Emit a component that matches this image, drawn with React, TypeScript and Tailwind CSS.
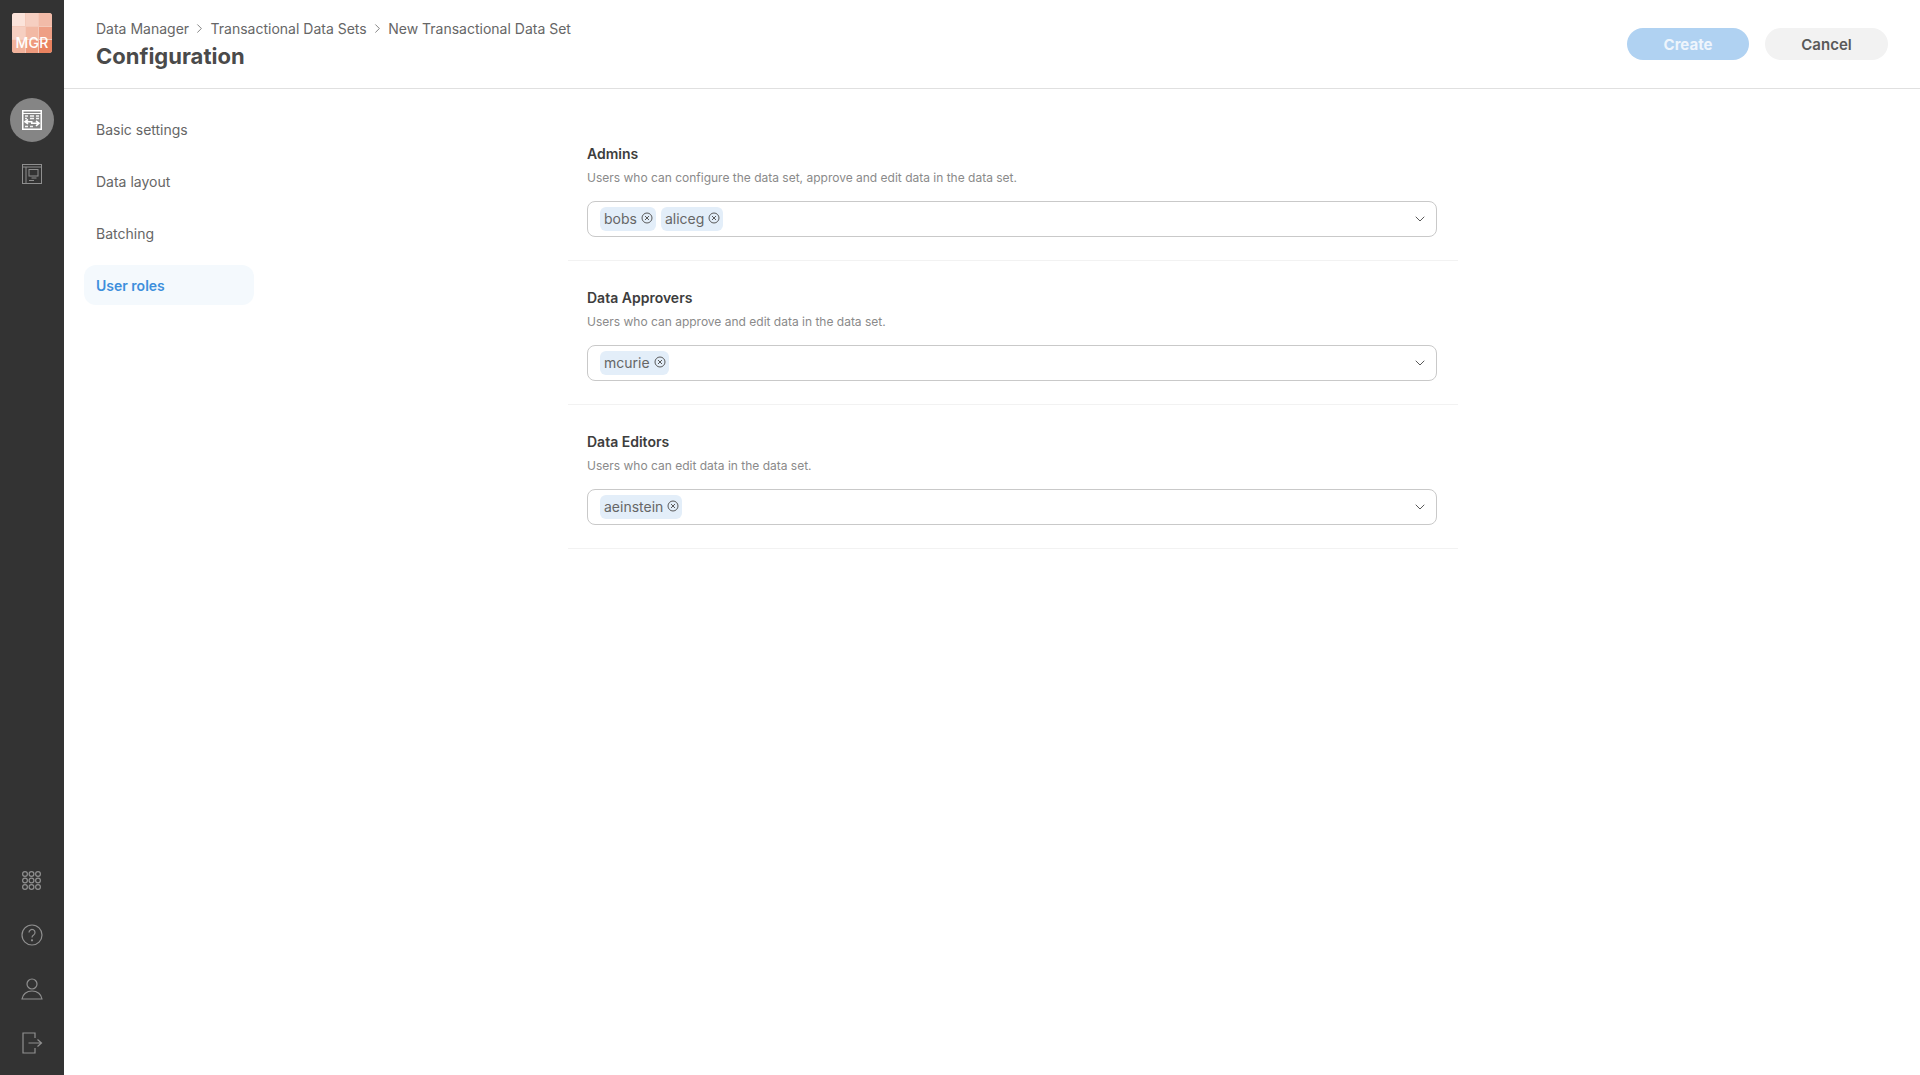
import { ChevronDown, ChevronRight } from "lucide-react";

const sideIcon = "w-[22px] h-[22px]";

function Logo() {
  const cells = ["#fbe3da", "#f6cfc1", "#f2bba8", "#f6cfc1", "#f2b9a4", "#ee9f85", "#f2b29b", "#ee9a7d", "#e9825f"];
  return (
    <div className="relative w-10 h-10 rounded-[3px] overflow-hidden grid grid-cols-3 grid-rows-3 gap-px bg-[#f4c9b9]">
      {cells.map((c, i) => (
        <div key={i} style={{ backgroundColor: c }} />
      ))}
      <span className="absolute left-0 right-0 bottom-[2px] text-center text-white text-[14px] leading-[17px] font-medium tracking-[0.2px]">
        MGR
      </span>
    </div>
  );
}

function DataSetIcon() {
  return (
    <svg viewBox="0 0 20 20" className="w-5 h-5" fill="none" stroke="#fff">
      <rect x="0.75" y="0.75" width="18.5" height="18.5" strokeWidth="1.5" />
      <path d="M1 3.500h18" strokeWidth="1" />
      <path d="M3 6h3M8 6h4M14 6h3M8 8.500h4M14 8.500h3M3 8.500h2M3 16.500h3M8 16.500h3" strokeWidth="1.400" opacity="0.9" />
      <path d="M6 9.500l-3 2.200 3 2.200M3 11.700h7.500M14 10.800l3 2.500-3 2.500M9 13.300h8" strokeWidth="1.600" />
    </svg>
  );
}

function PagesIcon() {
  return (
    <svg viewBox="0 0 20 20" className="w-5 h-5" fill="none" stroke="#8f8f8f" strokeWidth="1">
      <rect x="0.5" y="0.5" width="19" height="19" />
      <path d="M0.5 3h19M4 3v16.500" />
      <rect x="7" y="5.500" width="9" height="6.500" />
      <path d="M9.500 14h5M7 16.500h5" />
    </svg>
  );
}

function AppsIcon() {
  const pts = [3, 9.5, 16];
  return (
    <svg viewBox="0 0 20 20" className={sideIcon} fill="none" stroke="#8f8f8f" strokeWidth="1.2">
      {pts.map((y) => pts.map((x) => <circle key={`${x}-${y}`} cx={x} cy={y} r="2.4" />))}
    </svg>
  );
}

function HelpIcon() {
  return (
    <svg viewBox="0 0 22 22" className={sideIcon} fill="none" stroke="#8f8f8f" strokeWidth="1.2">
      <circle cx="11" cy="11" r="10" />
      <path d="M8 8.500a3 3 0 1 1 4.600 2.500c-1 .6-1.600 1.200-1.600 2.500" />
      <circle cx="11" cy="16.300" r="0.5" fill="#8f8f8f" />
    </svg>
  );
}

function UserIcon() {
  return (
    <svg viewBox="0 0 22 22" className={sideIcon} fill="none" stroke="#8f8f8f" strokeWidth="1.2">
      <circle cx="11" cy="6" r="5" />
      <path d="M1 21c.6-4.600 4.600-8 10-8s9.400 3.400 10 8z" />
    </svg>
  );
}

function LogoutIcon() {
  return (
    <svg viewBox="0 0 22 22" className={sideIcon} fill="none" stroke="#8f8f8f" strokeWidth="1.2">
      <path d="M14 6V1H2v20h12v-5" />
      <path d="M7.500 11H20M16.500 7.500L20.500 11l-4 3.500" />
    </svg>
  );
}

function Sidebar() {
  return (
    <div className="w-16 shrink-0 bg-[#333333] flex flex-col items-center">
      <div className="mt-[13px]">
        <Logo />
      </div>
      <div className="mt-[45px] w-11 h-11 rounded-full bg-[#858585] flex items-center justify-center">
        <DataSetIcon />
      </div>
      <div className="mt-[21px] w-11 h-[22px] flex items-center justify-center">
        <PagesIcon />
      </div>
      <div className="mt-auto mb-[21px] flex flex-col items-center gap-[32px]">
        <div className="w-5 h-[22px] flex items-center justify-center"><AppsIcon /></div>
        <HelpIcon />
        <UserIcon />
        <LogoutIcon />
      </div>
    </div>
  );
}

function Crumbs() {
  const items = ["Data Manager", "Transactional Data Sets", "New Transactional Data Set"];
  return (
    <div className="flex items-center text-[14px] leading-5 text-[#666666]">
      {items.map((item, i) => (
        <div key={item} className="flex items-center">
          {i > 0 && <ChevronRight size={15} strokeWidth={1.1} className="mx-[3.25px] text-[#4d4d4d] -translate-y-px" />}
          <span>{item}</span>
        </div>
      ))}
    </div>
  );
}

function Header() {
  return (
    <div className="h-[89px] shrink-0 border-b border-[#e0e0e0] pl-8 pr-8 flex items-start justify-between">
      <div className="pt-[19px]">
        <Crumbs />
        <h1 className="mt-[2px] text-[22px] leading-[30px] font-bold text-[#4a4a4a]">Configuration</h1>
      </div>
      <div className="pt-[28px] flex gap-4">
        <button className="w-[122px] h-8 pt-0.5 rounded-2xl bg-[#b0d2f2] text-[#eef5fc] text-[15px] font-bold">Create</button>
        <button className="w-[123px] h-8 pt-0.5 rounded-2xl bg-[#f2f2f2] text-[#595959] text-[15px] font-semibold">Cancel</button>
      </div>
    </div>
  );
}

function SideNav() {
  const items = ["Basic settings", "Data layout", "Batching"];
  return (
    <div className="w-[170px] ml-5 mt-5 flex flex-col gap-3 text-[14px] text-[#666666] shrink-0">
      {items.map((item) => (
        <div key={item} className="h-10 px-3 flex items-center">{item}</div>
      ))}
      <div className="h-10 px-3 flex items-center rounded-xl bg-[#f4f9fd] text-[#3d8fdc] font-semibold">User roles</div>
    </div>
  );
}

function Tag({ label }: { label: string }) {
  return (
    <div className="h-6 rounded-md bg-[#e3eef9] pl-1 pr-[3px] flex items-center gap-[4px] text-[14px] text-[#666666]">
      <span className="-translate-y-px">{label}</span>
      <svg viewBox="0 0 12 12" className="w-3 h-3 -translate-y-px" fill="none" stroke="#595959" strokeWidth="1">
        <circle cx="6" cy="6" r="5" />
        <path d="M4 4l4 4M8 4l-4 4" />
      </svg>
    </div>
  );
}

function RoleSection({ title, description, users }: { title: string; description: string; users: string[] }) {
  return (
    <div className="h-[144px] border-b border-[#f2f2f2] pl-[19px] pr-[21px] pt-[27px]">
      <div className="text-[14px] leading-5 font-semibold text-[#3d3d3d]">{title}</div>
      <div className="mt-1 text-[12px] leading-5 text-[#8a8a8a]">{description}</div>
      <div className="mt-[13px] h-9 rounded-lg border border-[#c9c9c9] pl-[12px] pr-2 flex items-center gap-[5px]">
        {users.map((u) => (
          <Tag key={u} label={u} />
        ))}
        <ChevronDown size={16} strokeWidth={1.5} className="ml-auto text-[#595959]" />
      </div>
    </div>
  );
}

export default function App() {
  return (
    <div className="w-full h-[1075px] flex bg-white overflow-hidden font-['Inter',sans-serif]">
      <Sidebar />
      <div className="flex-1 flex flex-col">
        <Header />
        <div className="flex-1 flex">
          <SideNav />
          <div className="ml-[314px] mt-[28px] w-[890px]">
            <RoleSection
              title="Admins"
              description="Users who can configure the data set, approve and edit data in the data set."
              users={["bobs", "aliceg"]}
            />
            <RoleSection
              title="Data Approvers"
              description="Users who can approve and edit data in the data set."
              users={["mcurie"]}
            />
            <RoleSection
              title="Data Editors"
              description="Users who can edit data in the data set."
              users={["aeinstein"]}
            />
          </div>
        </div>
      </div>
    </div>
  );
}
